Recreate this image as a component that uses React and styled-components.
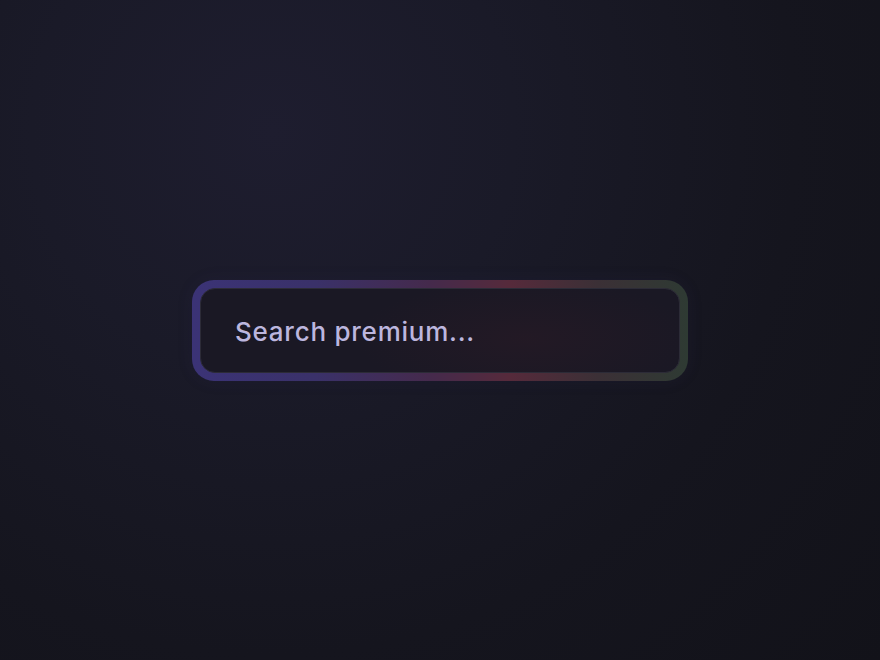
import styled, { createGlobalStyle } from "styled-components";

const GlobalStyle = createGlobalStyle`
  html, body {
    margin: 0;
    padding: 0;
    height: 100%;
  }
  #root {
    height: 100%;
  }
`;

const Page = styled.div`
  box-sizing: border-box;
  height: 100vh;
  display: flex;
  align-items: center;
  justify-content: center;
  background: radial-gradient(
    circle at 31% 20%,
    #1e1d2f 0%,
    #1a1a28 30%,
    #15151e 65%,
    #121219 100%
  );
  font-family: Inter, "Noto Sans", sans-serif;
`;

const Frame = styled.div`
  box-sizing: border-box;
  width: 496px;
  height: 101px;
  padding: 8px;
  border-radius: 22px;
  background: linear-gradient(
    90deg,
    #3b3376 0%,
    #3a3169 25%,
    #452a4c 48%,
    #562a3b 64%,
    #3b3036 82%,
    #2e3a33 100%
  );
  box-shadow: 0 0 16px rgba(60, 50, 110, 0.12);
`;

const Field = styled.label`
  box-sizing: border-box;
  height: 100%;
  display: flex;
  align-items: center;
  padding: 3px 34px 0;
  border-radius: 15px;
  border: 1px solid #2c2b37;
  background:
    radial-gradient(ellipse 170px 60px at 68% 60%, rgba(70, 30, 40, 0.2), transparent 100%),
    #1a1824;
`;

const Input = styled.input`
  flex: 1;
  min-width: 0;
  border: none;
  outline: none;
  background: transparent;
  font-family: inherit;
  font-size: 26px;
  font-weight: 500;
  letter-spacing: 0.75px;
  color: #bcb6de;
  padding: 0;

  &::placeholder {
    color: #bcb6de;
    opacity: 1;
  }
`;

const App = () => {
  return (
    <>
      <GlobalStyle />
      <Page>
        <Frame>
          <Field>
            <Input placeholder="Search premium..." />
          </Field>
        </Frame>
      </Page>
    </>
  );
};

export default App;
